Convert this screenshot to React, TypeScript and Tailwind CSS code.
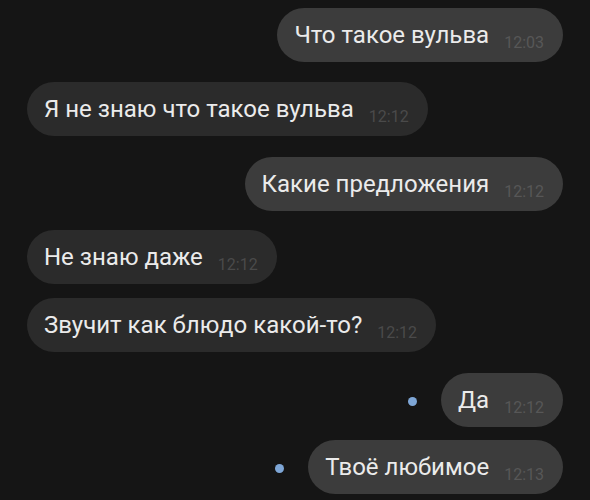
import React from "react";

interface Message {
  text: string;
  time: string;
  mine: boolean;
  unread?: boolean;
  gap: string;
}

const messages: Message[] = [
  { text: "Что такое вульва", time: "12:03", mine: true, gap: "mt-[8px]" },
  { text: "Я не знаю что такое вульва", time: "12:12", mine: false, gap: "mt-[20px]" },
  { text: "Какие предложения", time: "12:12", mine: true, gap: "mt-[21px]" },
  { text: "Не знаю даже", time: "12:12", mine: false, gap: "mt-[19px]" },
  { text: "Звучит как блюдо какой-то?", time: "12:12", mine: false, gap: "mt-[14px]" },
  { text: "Да", time: "12:12", mine: true, unread: true, gap: "mt-[21px]" },
  { text: "Твоё любимое", time: "12:13", mine: true, unread: true, gap: "mt-[13px]" },
];

function Bubble({ m }: { m: Message }) {
  return (
    <div className={`flex items-center ${m.mine ? "justify-end" : "justify-start"} ${m.gap}`}>
      {m.unread && <span className="w-[9px] h-[9px] rounded-full bg-[#7ea6d6] mr-[24px] mt-[3px]" />}
      <div
        className={`h-[54px] rounded-full flex items-baseline pl-[17px] pr-[19px] ${
          m.mine ? "bg-[#3c3c3c]" : "bg-[#2b2b2b]"
        }`}
      >
        <span className="text-[24px] leading-[54px] text-[#ebebeb]">{m.text}</span>
        <span
          className={`text-[16px] ml-[15px] translate-y-[5px] ${m.mine ? "text-[#575757]" : "text-[#4a4a4a]"}`}
        >
          {m.time}
        </span>
      </div>
    </div>
  );
}

export default function App() {
  return (
    <div
      className="w-[590px] h-[500px] overflow-hidden bg-[#151515] px-[27px] flex flex-col"
      style={{ fontFamily: "Roboto, 'Noto Sans', sans-serif" }}
    >
      {messages.map((m, i) => (
        <Bubble key={i} m={m} />
      ))}
    </div>
  );
}
